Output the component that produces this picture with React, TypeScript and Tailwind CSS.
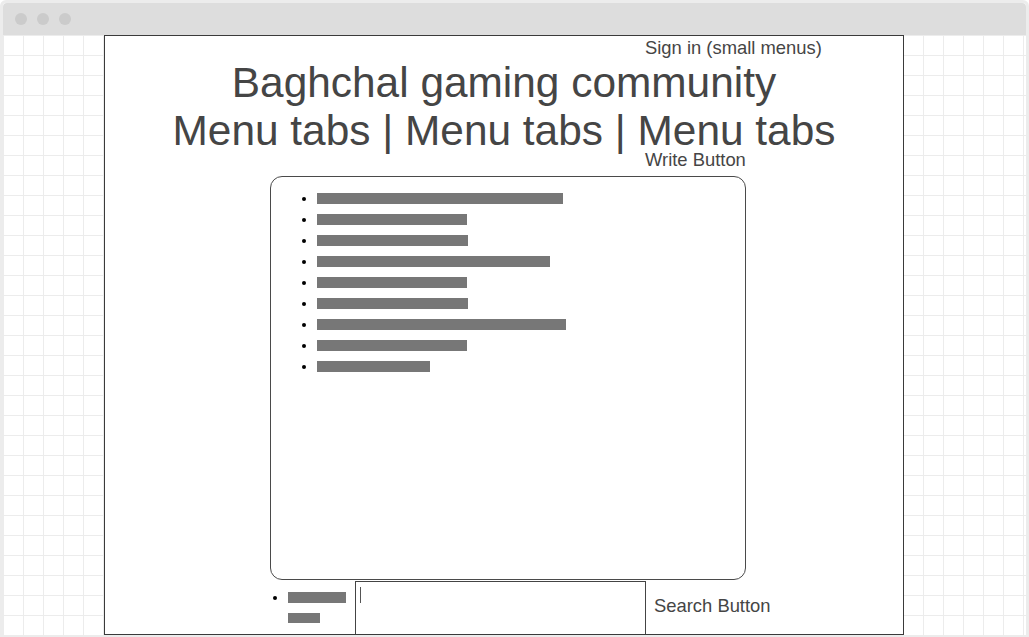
const LIST_BARS = [246, 150, 151, 233, 150, 151, 249, 150, 113];

function Bullet() {
  return <span className="block h-[4px] w-[4px] shrink-0 rounded-full bg-black" />;
}

export default function App() {
  return (
    <div className="h-[637px] w-[1029px] overflow-hidden bg-white font-['Liberation_Sans',Arial,sans-serif] text-[#454545]">
      <div className="flex h-full w-full flex-col rounded-t-[6px] border-x-[3px] border-t-[3px] border-b-[2px] border-[#ececec]">
        {/* window title bar */}
        <div className="flex h-[32px] shrink-0 items-center gap-[10px] rounded-t-[4px] bg-[#dddddd] pl-[12px]">
          <span className="block h-[12px] w-[12px] rounded-full bg-[#cbcbcb]" />
          <span className="block h-[12px] w-[12px] rounded-full bg-[#cbcbcb]" />
          <span className="block h-[12px] w-[12px] rounded-full bg-[#cbcbcb]" />
        </div>

        {/* grid canvas */}
        <div className="flex-1 bg-white bg-[image:linear-gradient(to_right,#ececec_1px,transparent_1px),linear-gradient(to_bottom,#ececec_1px,transparent_1px)] bg-[size:20px_20px]">
          <div className="ml-[101px] flex h-[600px] w-[800px] flex-col overflow-hidden border border-[#3a3a3a] bg-white">
            <div className="ml-[540px] mt-[2px] text-[18.4px] leading-[20px]">Sign in (small menus)</div>

            <div className="text-center text-[42.4px]">
              <div className="leading-[49px]">Baghchal gaming community</div>
              <div className="mt-[3px] leading-[42px]">Menu tabs | Menu tabs | Menu tabs</div>
            </div>

            <div className="ml-[540px] mt-[2px] text-[18.4px] leading-[12px]">Write Button</div>

            {/* post list */}
            <div className="ml-[165px] mt-[10px] h-[404px] w-[476px] shrink-0 rounded-[12px] border border-[#4a4a4a] pl-[31px] pt-[16px]">
              <div className="flex flex-col gap-[10px]">
                {LIST_BARS.map((w, i) => (
                  <div key={i} className="flex h-[11px] items-center">
                    <Bullet />
                    <span className="ml-[11px] block h-[11px] bg-[#777777]" style={{ width: `${w}px` }} />
                  </div>
                ))}
              </div>
            </div>

            {/* bottom row: pager, search box, search button */}
            <div className="ml-[168px] mt-[1px] flex h-[60px] shrink-0 items-start">
              <div className="mt-[15px]">
                <Bullet />
              </div>
              <div className="ml-[11px] flex w-[67px] shrink-0 flex-col gap-[10px] pt-[11px]">
                <span className="block h-[11px] w-[58px] bg-[#777777]" />
                <span className="block h-[10px] w-[32px] bg-[#777777]" />
              </div>
              <div className="h-[60px] w-[291px] shrink-0 border border-[#444444] pl-[4px] pt-[5px]">
                <span className="block h-[16px] w-px bg-[#555555]" />
              </div>
              <div className="ml-[8px] mt-[15px] text-[18.4px] leading-[20px]">Search Button</div>
            </div>
          </div>
        </div>
      </div>
    </div>
  );
}
